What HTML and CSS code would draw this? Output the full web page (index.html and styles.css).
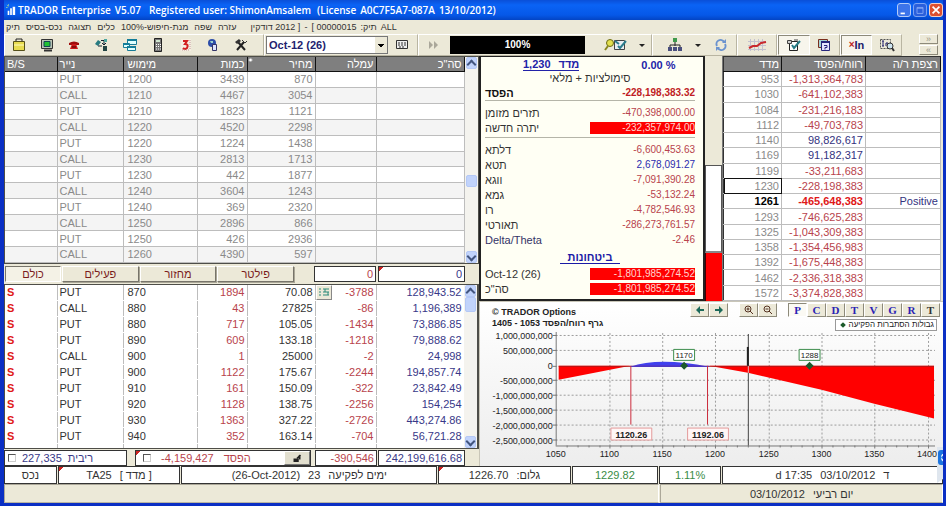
FILE: index.html
```html
<!DOCTYPE html>
<html lang="he">
<head>
<meta charset="utf-8">
<title>TRADOR Enterprise V5.07</title>
<link rel="stylesheet" href="styles.css">
</head>
<body>
<header class="titlebar">
  <svg class="app-icon" viewBox="0 0 12 14"><path d="M1 1l2 2M3 0v2M0 4h2" stroke="#9fd09f"/><path d="M2 13V8h2v5M5 13V5h2v8M8 13V3h3v10" fill="#fff"/></svg>
  <h1><span>TRADOR Enterprise</span><span>V5.07</span></h1>
  <span class="t-user">Registered user: ShimonAmsalem</span>
  <span class="t-lic"><span>(License</span><span>A0C7F5A7-087A</span><span>13/10/2012)</span></span>
  <div class="win-btns">
    <button class="wb" aria-label="Minimize"><svg viewBox="0 0 14 14"><path d="M3 10h5v2H3z" fill="#fff"/></svg></button>
    <button class="wb dim" aria-label="Maximize"><svg viewBox="0 0 14 14"><path d="M3.500 4h7v7h-7zM3.500 5h7" fill="none" stroke="#86a8f4"/></svg></button>
    <button class="wb close" aria-label="Close"><svg viewBox="0 0 14 14"><path d="M3 3l8 8M11 3l-8 8" stroke="#fff" stroke-width="2"/></svg></button>
  </div>
</header>

<nav class="menu">
  <button>תיק</button><button>נכס-בסיס</button><button>תצוגה</button><button>כלים</button>
  <button>מנת-חיפוש-100%</button><button>שפה</button><button>עזרה</button>
  <span class="doc"><bdi>[ 2012 דודקין</bdi><bdi>-</bdi><bdi>[ 00000015</bdi><bdi>תיק:</bdi><bdi>ALL</bdi></span>
</nav>

<div class="toolbar">
  <div class="tg tools">
    <button aria-label="Portfolio"><svg viewBox="0 0 16 14"><path d="M5 3V1h6v2" fill="none" stroke="#222"/><path d="M2.500 3.500h11v9h-11z" fill="#e8dc50" stroke="#55501a"/><path d="M3 7h10" stroke="#fffbc0"/></svg></button>
    <button aria-label="Monitor"><svg viewBox="0 0 16 14"><path d="M2.500 1.500h11v9h-11z" fill="#b9c4b4" stroke="#333"/><path d="M5 3.500h6v5H5z" fill="#1fc132" stroke="#145"/><path d="M5 12.500h8" stroke="#333" stroke-width="2"/></svg></button>
    <button aria-label="Phone"><svg viewBox="0 0 16 14"><path d="M3 5q5-3 10 0v2h-3V6H6v1H3z" fill="#a00c0c"/><path d="M6 6h4l2 5H4z" fill="#cc1818"/><path d="M6 9h4" stroke="#400"/></svg></button>
    <button aria-label="Transfer"><svg viewBox="0 0 16 14"><path d="M1 6l3-4 3 2-3 4z" fill="#277b80"/><path d="M7 2.500h3v4M8 5l2 2 2-2M4 8h4" fill="none" stroke="#123"/><path d="M10 1h3v3h-3z" fill="#4aa6a0"/><path d="M9 8h4v5H9z" fill="#244"/></svg></button>
    <button aria-label="Windows"><svg viewBox="0 0 16 14"><path d="M5.500 1.500h9v5h-9zM1.500 5.500h6v4h-6zM5.500 8.500h8v4h-8z" fill="#dff" stroke="#177b96"/><path d="M5 2h10M1 6h6M5 9h9" stroke="#137d9a" stroke-width="2"/></svg></button>
    <button class="wide" aria-label="Calculator"><svg viewBox="0 0 16 14"><path d="M4.500.5h7v13h-7z" fill="#777" stroke="#222"/><path d="M6 3h4" stroke="#cfe5cf" stroke-width="2"/><path d="M6 6.500h5M6 8.500h5M6 11h5" stroke="#fff" stroke-dasharray="1 1"/></svg></button>
    <button aria-label="Calendar"><svg viewBox="0 0 16 14"><path d="M3 1h10v12H3z" fill="#f6efe2"/><path d="M5 3h4l-2 3q4 0 2 4-2 2-4 0" fill="none" stroke="#d22020" stroke-width="2"/><path d="M12 2v10M4 12h8" stroke="#b99" stroke-dasharray="1 1"/></svg></button>
    <button aria-label="Web"><svg viewBox="0 0 16 14"><circle cx="7" cy="5" r="4" fill="#2c4da8"/><path d="M5 3h3v2H6z" fill="#9ad0ce"/><path d="M7.500 6.500h4v6h-4z" fill="#dbe4ff" stroke="#336"/></svg></button>
    <button aria-label="Settings"><svg viewBox="0 0 16 14"><path d="M4 12l7-8M5 4l7 8" stroke="#222" stroke-width="2"/><path d="M2 4l4-3 2 2-4 3z" fill="#333"/><path d="M9 2l3 3 2-2" fill="none" stroke="#333"/></svg></button>
  </div>
  <div class="tg series">
    <select class="combo" aria-label="Series"><option>Oct-12 (26)</option></select>
    <button aria-label="Keyboard"><svg viewBox="0 0 16 14"><path d="M2.500 2.500h11v8h-11z" fill="#eee" stroke="#333"/><path d="M4 5h8M4 7h8M5 9h6" stroke="#333" stroke-dasharray="2 1"/></svg></button>
  </div>
  <div class="tg run">
    <button aria-label="Forward"><svg viewBox="0 0 16 14"><path d="M4 3l4 4-4 4zM9 3l4 4-4 4z" fill="#aaa79a"/></svg></button>
    <div class="progress" role="progressbar" aria-valuenow="100">100%</div>
    <button class="big" aria-label="Review"><svg viewBox="0 0 24 14"><path d="M10.500 2.500h10v9h-10z" fill="#e9eef2" stroke="#444"/><path d="M11 3l4 3M14 8l2 2 6-7" fill="none" stroke="#2c7d8c" stroke-width="2"/><circle cx="6" cy="5" r="3.500" fill="#e3e04e" stroke="#6b6a14"/><path d="M4 8l-3 4" stroke="#8a8820" stroke-width="2"/></svg></button>
    <span class="caret"></span>
  </div>
  <div class="tg tree">
    <button aria-label="Tree"><svg viewBox="0 0 16 14"><path d="M8 4v4M3 10V7h10v3" fill="none" stroke="#222"/><path d="M6 0h4v4H6z" fill="#3f9a4c"/><path d="M1 9h4v4H1zM6 9h4v4H6zM11 9h4v4h-4z" fill="#4a4f7e"/></svg></button>
    <span class="caret"></span>
    <button aria-label="Refresh"><svg viewBox="0 0 16 14"><path d="M4 8a4 4 0 0 1 7-4M12 6a4 4 0 0 1-7 4" fill="none" stroke="#6b93cf" stroke-width="2"/><path d="M9 5h4V1zM7 9H3v4z" fill="#6b93cf"/></svg></button>
  </div>
  <div class="tg one">
    <button class="big" aria-label="Graph"><svg viewBox="0 0 24 14"><path d="M5.500 1v12M9.500 1v12M13.500 1v12M17.500 1v12M3 3.500h18M3 7.500h18M3 11.500h18" stroke="#c3c1cf"/><path d="M4 10l4-2 4 0 4-3 5-1" fill="none" stroke="#c9282d" stroke-width="2"/></svg></button>
  </div>
  <div class="tg pair">
    <button class="on" aria-label="Edit"><svg viewBox="0 0 16 14"><path d="M3.500 3.500h8v9h-8z" fill="#fff" stroke="#222"/><path d="M6 7l2 3 6-7" fill="none" stroke="#267b85" stroke-width="2"/><path d="M1.500 2.500h4v3h-4zM8 2h4" fill="#ccc" stroke="#444"/></svg></button>
    <button aria-label="Help window"><svg viewBox="0 0 16 14"><path d="M2.500 1.500h9v8h-9z" fill="#a6d3d4" stroke="#7a2d1c"/><path d="M5.500 4.500h8v8h-8z" fill="#e6e4ff" stroke="#27267c"/><path d="M5 4h9" stroke="#27267c" stroke-width="2"/><path d="M8 7.500h3v2H9v2" fill="none" stroke="#27267c"/></svg></button>
  </div>
  <div class="tg pair">
    <button class="on in" aria-label="Remove In"><sup>×</sup>In</button>
    <button aria-label="Search In"><svg viewBox="0 0 16 14"><path d="M1.500 1.500h10v9h-10z" fill="none" stroke="#555" stroke-dasharray="2 1"/><path d="M3 3h2M4 3v5M3 8h2M7 8V5h2v3" fill="none" stroke="#1b1b6b"/><circle cx="11" cy="8" r="3" fill="#cde3ee" stroke="#333"/><path d="M13 10l2 3" stroke="#333" stroke-width="2"/></svg></button>
  </div>
  <div class="stack"><button aria-label="More">»</button><button aria-label="Less">«</button></div>
</div>

<main class="work">
  <section class="left">
    <div class="grid-wrap upper">
      <table class="g dimrows">
        <colgroup><col class="c1"><col class="c2"><col class="c3"><col class="c4"><col class="c5"><col class="c6"><col class="c7"></colgroup>
        <thead><tr><th>B/S</th><th>נייר</th><th>מימוש</th><th>כמות</th><th class="mark">מחיר</th><th>עמלה</th><th>סה"כ</th></tr></thead>
        <tbody>
          <tr><td></td><td>PUT</td><td>1200</td><td>3439</td><td>870</td><td></td><td></td></tr>
          <tr><td></td><td>CALL</td><td>1210</td><td>4467</td><td>3054</td><td></td><td></td></tr>
          <tr><td></td><td>PUT</td><td>1210</td><td>1823</td><td>1121</td><td></td><td></td></tr>
          <tr><td></td><td>CALL</td><td>1220</td><td>4520</td><td>2298</td><td></td><td></td></tr>
          <tr><td></td><td>PUT</td><td>1220</td><td>1224</td><td>1438</td><td></td><td></td></tr>
          <tr><td></td><td>CALL</td><td>1230</td><td>2813</td><td>1713</td><td></td><td></td></tr>
          <tr><td></td><td>PUT</td><td>1230</td><td>442</td><td>1877</td><td></td><td></td></tr>
          <tr><td></td><td>CALL</td><td>1240</td><td>3604</td><td>1243</td><td></td><td></td></tr>
          <tr><td></td><td>PUT</td><td>1240</td><td>369</td><td>2320</td><td></td><td></td></tr>
          <tr><td></td><td>CALL</td><td>1250</td><td>2896</td><td>866</td><td></td><td></td></tr>
          <tr><td></td><td>PUT</td><td>1250</td><td>426</td><td>2936</td><td></td><td></td></tr>
          <tr><td></td><td>CALL</td><td>1260</td><td>4390</td><td>597</td><td></td><td></td></tr>
        </tbody>
      </table>
      <div class="sb"><span class="up"></span><span class="thumb mid"></span><span class="down"></span></div>
    </div>
    <div class="filters">
      <div class="tabs"><button class="on">כולם</button><button>פעילים</button><button>מחזור</button><button>פילטר</button></div>
      <input class="box neg" aria-label="עמלה" value="0"><input class="box pos tick" aria-label="סכום" value="0">
    </div>
    <div class="grid-wrap lower">
      <div class="clip"><table class="g live">
        <colgroup><col class="c1"><col class="c2"><col class="c3"><col class="c4"><col class="c5"><col class="c6"><col class="c7"></colgroup>
        <tbody>
          <tr><td>S</td><td>PUT</td><td>870</td><td>1894</td><td>70.08</td><td class="has-chip"><span class="chip"><svg viewBox="0 0 12 10"><path d="M1 1h2M1 4h2M1 7h2M5 1h6M5 4h6M5 7h6M7 1v3M10 4v3" stroke="#2a8a78" fill="none"/></svg></span>-3788</td><td>128,943.52</td></tr>
          <tr><td>S</td><td>CALL</td><td>880</td><td>43</td><td>27825</td><td>-86</td><td>1,196,389</td></tr>
          <tr><td>S</td><td>PUT</td><td>880</td><td>717</td><td>105.05</td><td>-1434</td><td>73,886.85</td></tr>
          <tr><td>S</td><td>PUT</td><td>890</td><td>609</td><td>133.18</td><td>-1218</td><td>79,888.62</td></tr>
          <tr><td>S</td><td>CALL</td><td>900</td><td>1</td><td>25000</td><td>-2</td><td>24,998</td></tr>
          <tr><td>S</td><td>PUT</td><td>900</td><td>1122</td><td>175.67</td><td>-2244</td><td>194,857.74</td></tr>
          <tr><td>S</td><td>PUT</td><td>910</td><td>161</td><td>150.09</td><td>-322</td><td>23,842.49</td></tr>
          <tr><td>S</td><td>PUT</td><td>920</td><td>1128</td><td>138.75</td><td>-2256</td><td>154,254</td></tr>
          <tr><td>S</td><td>PUT</td><td>930</td><td>1363</td><td>327.22</td><td>-2726</td><td>443,274.86</td></tr>
          <tr><td>S</td><td>PUT</td><td>940</td><td>352</td><td>163.14</td><td>-704</td><td>56,721.28</td></tr>
          <tr><td>S</td><td>CALL</td><td>950</td><td>7</td><td>10005.71</td><td>-14</td><td>105,545.37</td></tr>
        </tbody>
      </table></div>
      <div class="sb"><span class="up"></span><span class="thumb"></span><span class="down"></span></div>
    </div>
    <div class="sums">
      <label class="box chk pos"><input type="checkbox"><bdi>227,335</bdi><bdi>ריבית</bdi></label>
      <div class="box chk neg tick loss"><label><input type="checkbox"><bdi>-4,159,427</bdi><bdi>הפסד</bdi></label><button aria-label="Edit"><svg viewBox="0 0 16 12"><path d="M4 6h6v4H4z" fill="#222"/><path d="M8 6l4-4M11 2v5" stroke="#222" stroke-width="2"/></svg></button></div>
      <output class="box neg fee">-390,546</output>
      <output class="box pos tot">242,199,616.68</output>
    </div>
  </section>

  <section class="right">
    <div class="top">
      <div class="panel">
        <div class="p-head"><a href="#"><bdi>1,230</bdi><bdi>מדד</bdi></a><b>0.00 %</b></div>
        <p>סימולציות + מלאי</p>
        <dl class="strong"><div><dt>הפסד</dt><dd>-228,198,383.32</dd></div></dl>
        <dl class="cash"><div><dt>תזרים מזומן</dt><dd>-470,398,000.00</dd></div><div><dt>יתרה חדשה</dt><dd class="hot">-232,357,974.00</dd></div></dl>
        <dl class="greeks">
          <div><dt>דלתא</dt><dd>-6,600,453.63</dd></div>
          <div><dt>תטא</dt><dd class="plus">2,678,091.27</dd></div>
          <div><dt>ווגא</dt><dd>-7,091,390.28</dd></div>
          <div><dt>גמא</dt><dd>-53,132.24</dd></div>
          <div><dt>רו</dt><dd>-4,782,546.93</dd></div>
          <div><dt>תאורטי</dt><dd>-286,273,761.57</dd></div>
          <div><dt class="lat">Delta/Theta</dt><dd>-2.46</dd></div>
        </dl>
        <a class="sec" href="#">ביטחונות</a>
        <dl class="sec-rows"><div><dt>Oct-12 (26)</dt><dd class="hot">-1,801,985,274.52</dd></div><div><dt>סה"כ</dt><dd class="hot">-1,801,985,274.52</dd></div></dl>
      </div>
      <div class="gauge"><i class="g-top"></i><i class="g-mid"></i><i class="g-bot"></i></div>
      <table class="g pl">
        <colgroup><col class="p1"><col class="p2"><col class="p3"></colgroup>
        <thead><tr><th>מדד</th><th>רווח/הפסד</th><th>רצפת ר/ה</th></tr></thead>
        <tbody>
          <tr><td>953</td><td>-1,313,364,783</td><td></td></tr>
          <tr><td>1030</td><td>-641,102,383</td><td></td></tr>
          <tr><td>1084</td><td>-231,216,183</td><td></td></tr>
          <tr><td>1112</td><td>-49,703,783</td><td></td></tr>
          <tr><td>1140</td><td class="plus">98,826,617</td><td></td></tr>
          <tr><td>1169</td><td class="plus">91,182,317</td><td></td></tr>
          <tr><td>1199</td><td>-33,211,683</td><td></td></tr>
          <tr><td class="cur">1230</td><td>-228,198,383</td><td></td></tr>
          <tr class="bold"><td>1261</td><td>-465,648,383</td><td>Positive</td></tr>
          <tr><td>1293</td><td>-746,625,283</td><td></td></tr>
          <tr><td>1325</td><td>-1,043,309,383</td><td></td></tr>
          <tr><td>1358</td><td>-1,354,456,983</td><td></td></tr>
          <tr><td>1392</td><td>-1,675,448,383</td><td></td></tr>
          <tr><td>1462</td><td>-2,336,318,383</td><td></td></tr>
          <tr><td>1572</td><td>-3,374,828,383</td><td></td></tr>
        </tbody>
      </table>
    </div>
    <div class="chart">
      <div class="c-head">
        <div class="c-title"><div>© TRADOR Options</div><div><bdi>1405 - 1053</bdi> <bdi>גרף רווח/הפסד</bdi></div></div>
        <div class="c-tools">
          <div class="btns">
            <span><button aria-label="Left"><svg viewBox="0 0 16 12"><path d="M4 6l4-4v3h4v2H8v3z" fill="#1c6a5a"/></svg></button><button aria-label="Right"><svg viewBox="0 0 16 12"><path d="M12 6L8 2v3H4v2h4v3z" fill="#1c6a5a"/></svg></button></span>
            <span><button aria-label="Zoom in"><svg viewBox="0 0 16 12"><circle cx="7" cy="5" r="3" fill="none" stroke="#532"/><path d="M5.500 5h3M7 3.500v3M9 7l3 3" stroke="#532"/></svg></button><button aria-label="Zoom out"><svg viewBox="0 0 16 12"><circle cx="7" cy="5" r="3" fill="none" stroke="#532"/><path d="M5.500 5h3M9 7l3 3" stroke="#532"/></svg></button></span>
            <span class="letters"><button class="on">P</button><button>C</button><button>D</button><button>T</button><button>V</button><button>G</button><button>R</button><button class="k">T</button></span>
          </div>
          <div class="legend"><i></i><bdi>גבולות הסתברות הפקיעה</bdi></div>
        </div>
      </div>
      <svg class="plot" viewBox="0 0 465 131">
        <g class="gridl">
          <path d="M76 4.500H457M76 19.500H457M76 49.500H457M76 64.500H457M76 79.500H457M76 94.500H457M76 109.500H457"/>
          <path d="M130.500 2V115M183.500 2V115M236.500 2V115M290.500 2V115M343.500 2V115M396.500 2V115M450.500 2V115"/>
        </g>
        <path class="axis" d="M76.500 1V115M76 115.500H457M73 4.500h4M73 19.500h4M73 35.500h4M73 49.500h4M73 64.500h4M73 79.500h4M73 94.500h4M73 109.500h4M130.500 115v3M183.500 115v3M236.500 115v3M290.500 115v3M343.500 115v3M396.500 115v3M450.500 115v3M87.500 115v2M98.500 115v2M109.500 115v2M120.500 115v2M141.500 115v2M152.500 115v2M163.500 115v2M174.500 115v2M194.500 115v2M205.500 115v2M216.500 115v2M227.500 115v2M247.500 115v2M258.500 115v2M269.500 115v2M280.500 115v2M301.500 115v2M312.500 115v2M323.500 115v2M334.500 115v2M354.500 115v2M365.500 115v2M376.500 115v2M387.500 115v2M407.500 115v2M418.500 115v2M429.500 115v2M440.500 115v2"/>
        <path class="red" d="M79 35V49L151 35zM230 35L269 42 343 59 396 73 456 88V35z"/>
        <path class="blue" d="M151 36Q165 31 185 31Q205 31 230 36z"/>
        <path d="M79 35.500H456" stroke="#b01818"/>
        <path d="M151 35.500H230" stroke="#3a3ae0"/>
        <path d="M151.500 35V94M228.500 35V94" stroke="#cc2a3a"/>
        <path d="M269.500 3V35M269.500 42V115" stroke="#444"/><path d="M269.500 35V42" stroke="#e9b0b0"/><path d="M269 16V35" stroke="#222" stroke-width="2"/>
        <g class="gbox"><path d="M194.500 18.500h21v11h-21zM320.500 18.500h21v11h-21z"/><path class="dia" d="M205 31l4 4-4 4-4-4zM331 31l4 4-4 4-4-4z"/></g>
        <path d="M131.500 97.500h41v12h-41zM208.500 97.500h41v12h-41z" fill="#fff6f6" stroke="#e49a9a"/>
        <g class="lab mid s"><text x="205" y="27">1170</text><text x="331" y="27">1288</text></g>
        <g class="lab mid b"><text x="152" y="107">1120.26</text><text x="229" y="107">1192.06</text></g>
        <g class="lab end"><text x="73" y="8">1,000,000,000</text><text x="73" y="23">500,000,000</text><text x="73" y="38">0</text><text x="73" y="53">-500,000,000</text><text x="73" y="68">-1,000,000,000</text><text x="73" y="83">-1,500,000,000</text><text x="73" y="98">-2,000,000,000</text><text x="73" y="113">-2,500,000,000</text></g>
        <g class="lab mid"><text x="76" y="127">1050</text><text x="130" y="127">1100</text><text x="183" y="127">1150</text><text x="236" y="127">1200</text><text x="290" y="127">1250</text><text x="343" y="127">1300</text><text x="396" y="127">1350</text><text x="449" y="127">1400</text></g>
      </svg>
      <svg class="tv" viewBox="0 0 9 36"><path d="M0 0H9V30L0 36z" fill="#dfe6ee"/><path d="M9 3H4Q1 3 1 6V15Q1 18 4 18H9z" fill="#1b74e0"/><path d="M9 6Q4 6 4 10.500T9 15z" fill="#fff"/><path d="M4 10.500l3-3v2h2v2H7v2z" fill="#1b74e0"/></svg>
    </div>
  </section>
</main>

<footer>
  <div class="st1">
    <div>נכס</div>
    <div class="tick"><bdi>TA25</bdi><bdi>[ מדד ]</bdi></div>
    <div><bdi>(26-Oct-2012)</bdi><bdi>23</bdi><bdi>ימים לפקיעה</bdi></div>
    <div class="tick"><bdi>1226.70</bdi><bdi>גלום:</bdi></div>
    <div class="up">1229.82</div>
    <div class="up">1.11%</div>
    <div><bdi>d 17:35</bdi><bdi>03/10/2012</bdi><bdi>ד</bdi></div>
  </div>
  <div class="st2"><div></div><div><bdi>03/10/2012</bdi><bdi>יום רביעי</bdi></div></div>
</footer>
</body>
</html>
```
FILE: styles.css
```css
* { box-sizing: border-box; }
html, body { margin: 0; }
body {
  direction: ltr;
  min-height: 100vh;
  display: flex;
  flex-direction: column;
  background: #ece9d8;
  border: solid #0a2fc4;
  border-width: 0 3px 3px 4px;
  font: 11px/14px "Liberation Sans", sans-serif;
  color: #333;
}
button { font: inherit; color: inherit; padding: 0; border: 0; background: none; display: flex; align-items: center; justify-content: center; }
bdi { white-space: nowrap; }
a { color: #1a1aa6; }

.titlebar {
  display: flex;
  align-items: center;
  height: 20px;
  margin: 0 -3px 0 -4px;
  padding: 0 3px 0 6px;
  background: linear-gradient(#0a4fd8, #0a63f5 25%, #0558e8 75%, #0344c4);
  color: #fff;
  font: 600 10px/14px "Open Sans", sans-serif;
  white-space: nowrap;
}
.titlebar h1 { font: inherit; margin: 0; display: flex; gap: 4px; }
.app-icon { width: 10px; height: 14px; margin-right: 2px; }
.t-user { margin-left: 8px; }
.t-lic { margin-left: 6px; display: flex; gap: 4px; }
.win-btns { margin-left: auto; display: flex; gap: 2px; }
.wb { width: 14px; height: 14px; border: 1px solid #b5ccf8; border-radius: 3px; background: #3c74ea; }
.wb.dim { background: #2a5fdc; border-color: #7da3f2; }
.wb.close { background: #dc5030; border-color: #f4cfc4; }
.wb svg { width: 12px; height: 12px; }

.menu { display: flex; align-items: center; height: 14px; gap: 6px; padding-left: 2px; font-size: 9px; white-space: nowrap; }
.doc { display: flex; gap: 4px; margin-left: 8px; }

.toolbar {
  display: grid;
  grid-template-columns: 260fr 154fr 234fr 85fr 40fr 63fr 62fr 41fr;
  height: 22px;
}
.tg { display: flex; align-items: center; border: 1px solid; border-color: #fff #b9b5a2 #b9b5a2 #fff; min-width: 0; }
.tg button { width: 28px; height: 20px; flex: 0 1 auto; }
.tg svg { width: 16px; height: 14px; }
.tg .big svg { width: 24px; }
.tg.tools { padding: 0 8px 0 0; justify-content: space-between; }
.tg.one { justify-content: center; }
.tg.series { padding: 0 1px; }
.combo {
  flex: 1; height: 18px; border: 1px solid #777; border-radius: 0; padding: 0 2px;
  appearance: none; color: #22226e; font: bold 11px/16px "Liberation Sans", sans-serif;
  background: conic-gradient(from 315deg at 50% 50%, #000 90deg, transparent 0) right 3px top 7px / 6px 6px no-repeat, linear-gradient(#ece9d8, #ece9d8) right / 12px 100% no-repeat, #fff;
}
.tg.run { gap: 3px; }
.tg.run .big { margin-left: 14px; }
.progress { flex: 1; height: 18px; background: #000; color: #fff; font-weight: bold; font-size: 10px; line-height: 18px; text-align: center; }
.caret { border: solid transparent; border-width: 3px 3px 0; border-top-color: #222; margin: 0 6px; }
.tg.tree { padding-left: 8px; }
.tg.pair button { flex: 1; height: 20px; }
.tg .on { background: #f7f5ec; border: 1px solid; border-color: #8d8a7a #fff #fff #8d8a7a; }
.in { font-weight: bold; color: #1b1b6b; }
.in sup { color: #b22; font-size: 10px; line-height: 8px; }
.stack { display: flex; flex-direction: column; align-items: flex-end; padding: 0 5px 0 0; gap: 1px; }
.stack button { width: 19px; height: 10px; border: 1px solid; border-color: #fff #8d8a7a #8d8a7a #fff; color: #9b9888; font-size: 9px; line-height: 8px; }

.work { flex: 1; display: grid; grid-template-columns: 475fr 464fr; min-height: 410px; }
.left { display: flex; flex-direction: column; min-width: 0; }
.grid-wrap { display: flex; background: #fff; border: solid #4e4e48; border-width: 1px 2px 1px 1px; }
.g { width: 100%; border-collapse: collapse; table-layout: fixed; font: 11px/14px "Liberation Sans", sans-serif; }
.g th { background: #7f7f7f; color: #fff; font-weight: normal; text-align: right; border: solid #111; border-width: 0 1px 1px 0; }
.g th, .g td { padding: 0 2px; white-space: nowrap; }
.g td { text-align: right; border: solid #bdbdbd; border-width: 0 1px 1px 0; }
.left .g :is(th, td):nth-child(-n+3) { text-align: left; }
.left .g :is(th, td):nth-child(3) { padding-left: 4px; }
.mark { background: radial-gradient(circle at 3px 3px, #fff 1px, transparent 2px) #7f7f7f !important; }
.c1 { width: 52px; } .c2 { width: 66px; } .c3 { width: 74px; } .c4 { width: 50px; } .c5 { width: 68px; } .c6 { width: 61px; } .c7 { width: 88px; }
.dimrows { height: 206px; }
.dimrows td { color: #8a8a8a; }
.dimrows tr:nth-child(even) td { background: #f4f4f4; }

.sb { flex: 0 0 13px; display: flex; flex-direction: column; background: #f4f3ee; }
.sb span { height: 12px; margin: 0 1px; border-radius: 2px; background: #c1d3fb; border: 1px solid #b4c8f6; display: grid; place-items: center; }
.sb .up::after, .sb .down::after { content: ""; width: 5px; height: 5px; border: solid #43567f; border-width: 2px 0 0 2px; transform: translateY(1px) rotate(45deg); }
.sb .down::after { transform: translateY(-1px) rotate(225deg); }
.sb .down { margin-top: auto; }
.sb .mid { margin-top: 106px; }
.lower .thumb { height: 15px; }

.filters { display: flex; gap: 2px; height: 20px; padding: 2px 14px 2px 1px; }
.tabs { flex: 290; display: flex; margin-right: 17px; }
.tabs button { flex: 1; color: #7a1c1c; border: 1px solid; border-color: #fff #77746a #77746a #fff; box-shadow: 1px 1px #aaa797; margin-right: 1px; }
.tabs .on { background: #f4f2e6; border-color: #77746a #fff #fff #77746a; box-shadow: none; flex: 0 1 56px; }
.box { background: #fff; border: 1px solid #333; font: 11px/14px "Liberation Sans", sans-serif; text-align: right; padding: 0 2px; border-radius: 0; }
.filters .box { flex: 0 0 62px; width: 62px; }
.filters .box + .box { flex-basis: 87px; width: 87px; }
.neg { color: #b8434c; }
.pos { color: #383888; }
.tick { background-image: linear-gradient(135deg, #c22 3px, transparent 3px); }

.lower { flex: 1 1 0; overflow: hidden; }
.clip { flex: 1; height: 0; min-height: 100%; overflow: hidden; }
.live { height: 175px; }
.live td { border-bottom-color: #fff; }
.live td:nth-child(1) { color: #e01818; font-weight: bold; }
.live td:nth-child(4), .live td:nth-child(6) { color: #b8434c; }
.live td:nth-child(7) { color: #383888; }
.has-chip { position: relative; }
.chip { position: absolute; left: 0; top: 0; width: 16px; height: 15px; padding: 2px 1px; background: #ece9d8; border: 1px solid; border-color: #fff #888 #888 #fff; }
.chip svg { display: block; width: 12px; height: 10px; }

.sums { display: flex; height: 17px; padding: 1px 14px 0 0; }
.sums .box { white-space: nowrap; }
.chk, .chk label { display: flex; align-items: center; gap: 6px; }
.chk input { appearance: none; width: 8px; height: 8px; margin: 0 0 0 1px; border: 1px solid; border-color: #555 #ccc #ccc #555; }
.sums > .chk { flex: 122; margin-right: 8px; }
.sums > .loss { flex: 175; margin-right: 4px; padding: 0 0 0 6px; }
.loss label { flex: 1; gap: 10px; }
.loss button { width: 26px; height: 14px; background: #e2dfcf; border: 1px solid; border-color: #fff #777 #777 #fff; }
.loss svg { width: 14px; height: 11px; }
.fee { flex: 0 0 62px; margin-right: 1px; }
.tot { flex: 0 0 87px; }

.right { display: flex; flex-direction: column; min-width: 0; }
.top { display: grid; grid-template-columns: 226fr 18fr 218fr; height: 245px; padding-right: 2px; }
.panel { background: #fffff4; border: 2px solid #222; border-top-width: 1px; padding: 0 8px 0 4px; }
.p-head { display: flex; height: 15px; align-items: center; gap: 62px; padding-left: 38px; color: #2222a8; font-weight: bold; white-space: nowrap; }
.p-head a { display: flex; gap: 8px; border-bottom: 1px solid; line-height: 12px; text-decoration: none; color: inherit; }
.panel p { margin: 0; text-align: center; height: 13px; line-height: 13px; direction: rtl; }
.panel dl { margin: 0; }
.panel dl div { display: flex; align-items: center; justify-content: space-between; height: 15px; }
.panel dd { margin: 0; color: #b8434c; font: 10px/12px "Liberation Sans", sans-serif; text-align: right; }
.panel .plus { color: #2c2cae; }
.panel .hot { background: #f00; color: #ffd6d0; width: 105px; }
.strong { font-weight: bold; color: #111; border-bottom: 1px solid #b5b5a8; }
.panel .strong dd { color: #c01c24; font-weight: bold; }
.cash { padding: 4px 0 2px; border-bottom: 1px solid #b5b5a8; }
.greeks { padding-top: 4px; }
.lat { color: #333366; }
.sec { display: block; width: 60px; margin: 4px auto 2px; text-align: center; font-weight: bold; line-height: 12px; border-bottom: 1px solid; text-decoration: none; }
.gauge { display: flex; flex-direction: column; border-right: 1px solid #777; }
.g-top { flex: 109; }
.g-mid { flex: 86; background: #fff; border: 1px solid #555; border-bottom: 2px solid #888; }
.g-bot { flex: 48; background: #f00; border-left: 1px solid #400; }
.pl { background: #fff; height: 245px; border: solid #333; border-width: 1px; }
.pl td:nth-child(1) { color: #8a8a8a; }
.pl td:nth-child(2) { color: #b8434c; }
.pl td:nth-child(3), .pl td.plus:nth-child(2) { color: #333380; }
.pl .cur { outline: 1px solid #111; outline-offset: -1px; }
.pl .bold td:nth-child(1) { color: #000; font-weight: bold; }
.pl .bold td:nth-child(2) { color: #e01818; font-weight: bold; }
.p1 { width: 58px; } .p2 { width: 84px; }

.chart { flex: 1; position: relative; background: linear-gradient(#fff, #ededed); border: 1px solid #c9c6b8; border-width: 1px 0 0 1px; }
.c-head { display: flex; justify-content: space-between; height: 29px; }
.c-title { padding: 5px 0 0 12px; font: bold 9px/11px "Liberation Sans", sans-serif; color: #222; white-space: nowrap; }
.c-tools { display: flex; flex-direction: column; align-items: flex-end; }
.btns { display: flex; gap: 11px; padding: 1px 3px 0 0; }
.btns span { display: flex; }
.btns button { width: 19px; height: 14px; background: #ece9d8; border: 1px solid; border-color: #fff #8d8a7a #8d8a7a #fff; }
.btns svg { width: 16px; height: 12px; }
.letters button { font: bold 11px/12px "Liberation Serif", serif; color: #2a22b4; }
.btns .letters .k { color: #333; }
.btns .on { background: #fbfaf4; border-color: #8d8a7a #fff #fff #8d8a7a; }
.legend { display: flex; align-items: center; gap: 4px; margin: 2px 6px 0 0; height: 12px; padding: 0 2px 0 5px; background: #fff; border: 1px solid #999; font: 8px/10px "Liberation Sans", sans-serif; color: #222; }
.legend i { width: 4px; height: 4px; background: #1c5a2a; transform: rotate(45deg); }
.plot { display: block; width: 100%; }
.gridl path { stroke: #9c9c9c; stroke-dasharray: 2 2; fill: none; }
.axis { stroke: #777; fill: none; }
.red { fill: #f00; }
.blue { fill: #4040ee; }
.gbox path { fill: #fff; stroke: #3c8c4c; }
.gbox .dia { fill: #1c5a2a; stroke: none; }
.lab { font: 9px "Liberation Sans", sans-serif; fill: #222; }
.lab.mid { text-anchor: middle; }
.lab.end { text-anchor: end; }
.lab.b { font-weight: bold; }
.lab.s { font-size: 8px; }
.tv { position: absolute; right: -3px; bottom: -17px; width: 9px; height: 36px; }

.st1 { display: grid; grid-template-columns: 53fr 123fr 257fr 133fr 87fr 62fr 222fr; gap: 1px; height: 18px; }
.st1 div { background-color: #fff; border: 1px solid #333; display: flex; justify-content: center; align-items: center; gap: 8px; white-space: nowrap; }
.st1 .up { color: #3a8c46; }
.st2 { display: grid; grid-template-columns: 656fr 283fr; height: 19px; gap: 1px; }
.st2 div { border: 1px solid; border-color: #aca899 #fff #b9b5a2 #aca899; display: flex; justify-content: center; align-items: center; gap: 8px; }
```
